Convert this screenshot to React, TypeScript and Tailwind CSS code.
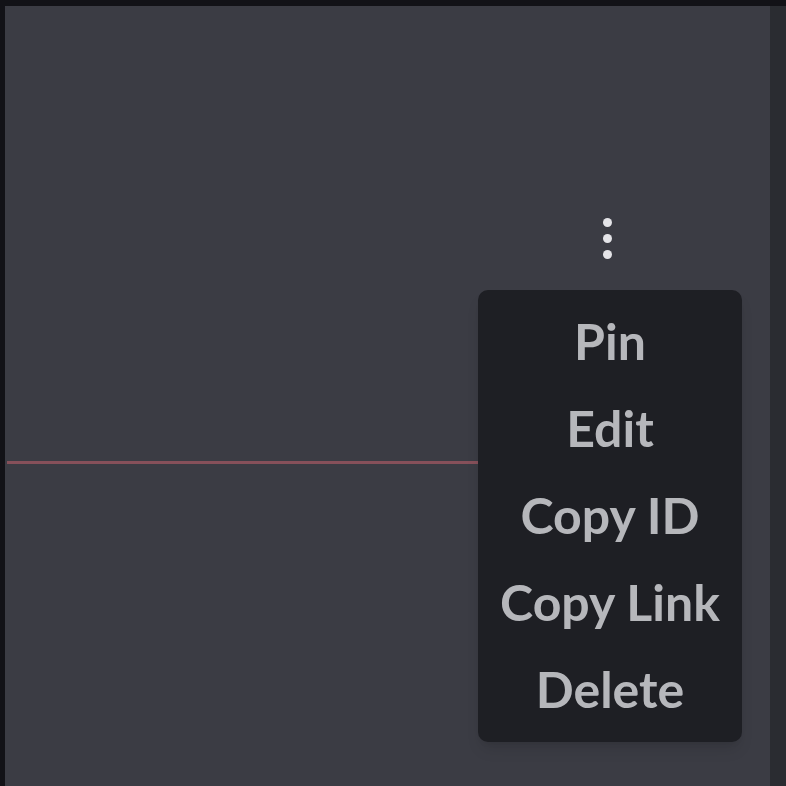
export default function App() {
  const items = ["Pin", "Edit", "Copy ID", "Copy Link", "Delete"];
  return (
    <div className="w-[786px] h-[786px] bg-[#121217] flex flex-col overflow-hidden" style={{ fontFamily: "Lato, 'Noto Sans', sans-serif" }}>
      <div className="h-[6px] shrink-0" />
      <div className="flex flex-1 min-h-0">
        <div className="w-[5px] shrink-0" />
        <div className="relative flex-1 bg-[#3b3c44]">
          {/* new message divider */}
          <div className="absolute left-[2px] top-[455px] w-[474px] h-[3px] bg-[#86505a]" />
          {/* more button */}
          <div className="absolute left-[598px] top-[212px] flex flex-col gap-[7px]">
            <div className="w-[9px] h-[9px] rounded-full bg-[#e4e4e8]" />
            <div className="w-[9px] h-[9px] rounded-full bg-[#e4e4e8]" />
            <div className="w-[9px] h-[9px] rounded-full bg-[#e4e4e8]" />
          </div>
          {/* context menu */}
          <div className="absolute left-[473px] top-[284px] w-[264px] h-[452px] rounded-[10px] bg-[#1e1f24] flex flex-col pt-[8px] pb-[10px] shadow-lg">
            {items.map((it) => (
              <div key={it} className="h-[87px] flex items-center justify-center text-[50px] font-bold text-[#b6b7bb] leading-none">
                {it}
              </div>
            ))}
          </div>
        </div>
        <div className="w-[16px] shrink-0 bg-[#2a2c31]" />
      </div>
    </div>
  );
}
